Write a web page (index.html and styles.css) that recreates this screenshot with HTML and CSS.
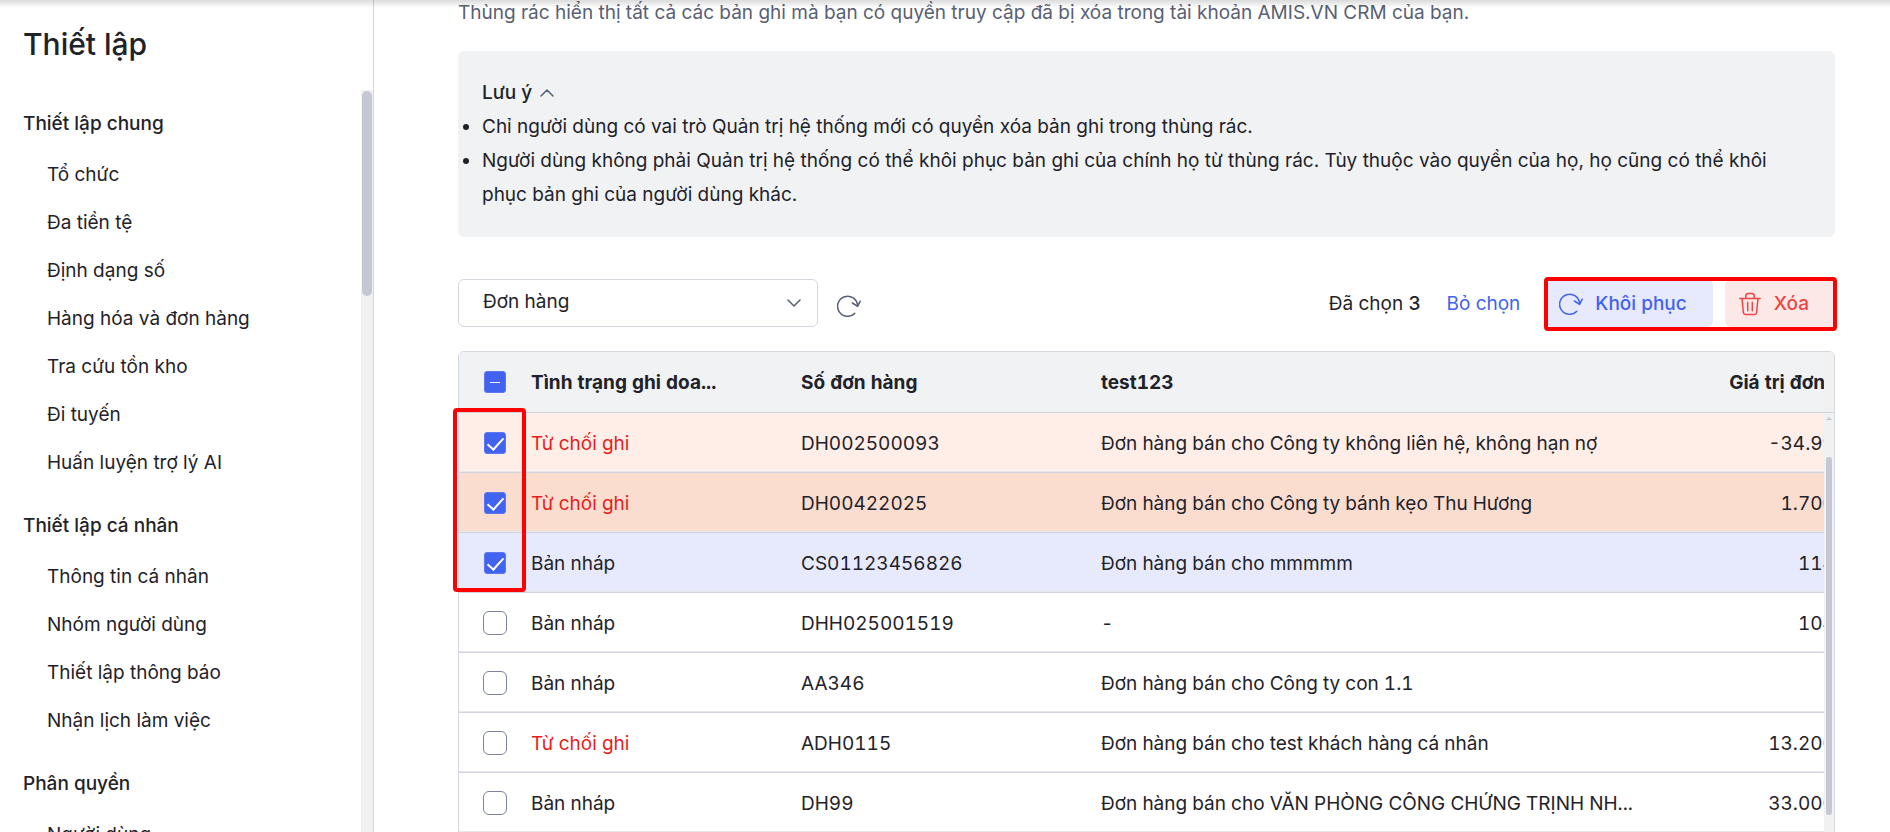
FILE: index.html
```html
<!DOCTYPE html>
<html lang="vi">
<head>
    <meta charset="UTF-8">
    <title>Thiết lập</title>
    <link rel="stylesheet" href="styles.css">
</head>
<body>
    <div class="top-shadow"></div>
    <div class="page">
        <aside class="sidebar">
            <h1>Thiết lập</h1>
            <div class="sidebar-body">
                <nav class="menu">
                    <h2>Thiết lập chung</h2>
                    <ul>
                        <li><a href="#">Tổ chức</a></li>
                        <li><a href="#">Đa tiền tệ</a></li>
                        <li><a href="#">Định dạng số</a></li>
                        <li><a href="#">Hàng hóa và đơn hàng</a></li>
                        <li><a href="#">Tra cứu tồn kho</a></li>
                        <li><a href="#">Đi tuyến</a></li>
                        <li><a href="#">Huấn luyện trợ lý AI</a></li>
                    </ul>
                    <h2>Thiết lập cá nhân</h2>
                    <ul>
                        <li><a href="#">Thông tin cá nhân</a></li>
                        <li><a href="#">Nhóm người dùng</a></li>
                        <li><a href="#">Thiết lập thông báo</a></li>
                        <li><a href="#">Nhận lịch làm việc</a></li>
                    </ul>
                    <h2>Phân quyền</h2>
                    <ul>
                        <li><a href="#">Người dùng</a></li>
                    </ul>
                </nav>
                <div class="scrollbar"><div class="thumb"></div></div>
            </div>
        </aside>

        <main class="content">
            <p class="description">Thùng rác hiển thị tất cả các bản ghi mà bạn có quyền truy cập đã bị xóa trong tài khoản AMIS.VN CRM của bạn.</p>

            <section class="note">
                <button type="button" class="note-title">Lưu ý
                    <svg width="14" height="8" viewBox="0 0 14 8"><path d="M1 7l6-6 6 6"/></svg>
                </button>
                <ul>
                    <li>Chỉ người dùng có vai trò Quản trị hệ thống mới có quyền xóa bản ghi trong thùng rác.</li>
                    <li>Người dùng không phải Quản trị hệ thống có thể khôi phục bản ghi của chính họ từ thùng rác. Tùy thuộc vào quyền của họ, họ cũng có thể khôi phục bản ghi của người dùng khác.</li>
                </ul>
            </section>

            <div class="toolbar">
                <div class="select-box">
                    <select aria-label="Loại bản ghi">
                        <option>Đơn hàng</option>
                    </select>
                    <svg width="14" height="8" viewBox="0 0 14 8"><path d="M1 1l6 6 6-6"/></svg>
                </div>
                <button type="button" class="refresh" aria-label="Tải lại">
                    <svg width="24" height="24" viewBox="0 0 24 24"><path d="M17.8 19.2A10 10 0 1 1 20.6 11.5M15.4 9l5.2 3.4L23.2 7.2"/></svg>
                </button>
                <div class="selected">Đã chọn <b>3</b></div>
                <a href="#" class="unselect">Bỏ chọn</a>
                <div class="actions">
                    <button type="button" class="btn restore">
                        <svg width="24" height="24" viewBox="0 0 24 24"><path d="M17.8 19.2A10 10 0 1 1 20.6 11.5M15.4 9l5.2 3.4L23.2 7.2"/></svg>
                        Khôi phục
                    </button>
                    <button type="button" class="btn delete">
                        <svg width="24" height="24" viewBox="0 0 24 24"><path d="M1.8 6.5h20.4M4 6.5l1.4 14.2a2 2 0 0 0 2 1.8h9.2a2 2 0 0 0 2-1.8L20 6.5M7.8 6.5V4a2.5 2.5 0 0 1 2.5-2.5h3.4A2.5 2.5 0 0 1 16.2 4v2.5M9.7 10.2v8.6M14.3 10.2v8.6"/></svg>
                        Xóa
                    </button>
                    <div class="mark mark-actions"></div>
                </div>
            </div>

            <div class="grid">
                <div class="grid-view">
                    <table>
                        <colgroup>
                            <col class="col-check">
                            <col class="col-status">
                            <col class="col-code">
                            <col>
                            <col class="col-value">
                        </colgroup>
                        <thead>
                            <tr>
                                <th><input type="checkbox" class="partial" aria-label="Chọn tất cả"></th>
                                <th>Tình trạng ghi doa...</th>
                                <th>Số đơn hàng</th>
                                <th>test123</th>
                                <th class="number">Giá trị đơn hàng</th>
                            </tr>
                        </thead>
                        <tbody>
                            <tr class="row-rejected">
                                <td><input type="checkbox" aria-label="DH002500093" checked></td>
                                <td class="rejected">Từ chối ghi</td>
                                <td>DH002500093</td>
                                <td>Đơn hàng bán cho Công ty không liên hệ, không hạn nợ</td>
                                <td class="number">-34.990,00</td>
                            </tr>
                            <tr class="row-hover">
                                <td><input type="checkbox" aria-label="DH00422025" checked></td>
                                <td class="rejected">Từ chối ghi</td>
                                <td>DH00422025</td>
                                <td>Đơn hàng bán cho Công ty bánh kẹo Thu Hương</td>
                                <td class="number">1.700.000</td>
                            </tr>
                            <tr class="row-selected">
                                <td><input type="checkbox" aria-label="CS01123456826" checked></td>
                                <td>Bản nháp</td>
                                <td>CS01123456826</td>
                                <td>Đơn hàng bán cho mmmmm</td>
                                <td class="number">114.000</td>
                            </tr>
                            <tr>
                                <td><input type="checkbox" aria-label="DHH025001519"></td>
                                <td>Bản nháp</td>
                                <td>DHH025001519</td>
                                <td>-</td>
                                <td class="number">104.000</td>
                            </tr>
                            <tr>
                                <td><input type="checkbox" aria-label="AA346"></td>
                                <td>Bản nháp</td>
                                <td>AA346</td>
                                <td>Đơn hàng bán cho Công ty con 1.1</td>
                                <td class="number"></td>
                            </tr>
                            <tr>
                                <td><input type="checkbox" aria-label="ADH0115"></td>
                                <td class="rejected">Từ chối ghi</td>
                                <td>ADH0115</td>
                                <td>Đơn hàng bán cho test khách hàng cá nhân</td>
                                <td class="number">13.200.000</td>
                            </tr>
                            <tr>
                                <td><input type="checkbox" aria-label="DH99"></td>
                                <td>Bản nháp</td>
                                <td>DH99</td>
                                <td>Đơn hàng bán cho VĂN PHÒNG CÔNG CHỨNG TRỊNH NH...</td>
                                <td class="number">33.000.000</td>
                            </tr>
                        </tbody>
                    </table>
                </div>
                <div class="grid-scroll">
                    <div class="corner"></div>
                    <div class="arrow"></div>
                    <div class="thumb"></div>
                </div>
                <div class="mark mark-rows"></div>
            </div>
        </main>
    </div>
</body>
</html>
```
FILE: styles.css
```css
* {
    box-sizing: border-box;
}

body {
    margin: 0;
    font-family: Inter, "Noto Sans", sans-serif;
    font-size: 19px;
    line-height: 24px;
    color: #1f2229;
    background-color: #fff;
    overflow: hidden;
}

h1, h2, p, ul {
    margin: 0;
    padding: 0;
}

button, select, input {
    font: inherit;
    color: inherit;
    margin: 0;
}

button {
    border: none;
    background: none;
    padding: 0;
    cursor: pointer;
}

a {
    text-decoration: none;
    color: inherit;
}

svg {
    flex: none;
    fill: none;
    stroke: #586074;
    stroke-width: 1.5;
    stroke-linecap: round;
    stroke-linejoin: round;
}

/* shadow under the app header */
.top-shadow {
    position: absolute;
    top: 0;
    left: 0;
    right: 0;
    height: 8px;
    background: linear-gradient(rgba(0, 0, 0, 0.14), rgba(0, 0, 0, 0));
}

.page {
    display: flex;
    height: 100vh;
}

/* sidebar */
.sidebar {
    flex: none;
    display: flex;
    flex-direction: column;
    width: 374px;
    border-right: 1px solid #d3d7de;
}

.sidebar h1 {
    flex: none;
    height: 90px;
    padding: 24px 23px 0;
    font-size: 30px;
    line-height: 40px;
    font-weight: 500;
}

.sidebar-body {
    flex: 1;
    min-height: 0;
    display: flex;
}

.menu {
    flex: 1;
    overflow: hidden;
    padding-top: 7px;
}

.menu h2 {
    padding-left: 23px;
    font-size: 19px;
    line-height: 54px;
    font-weight: 500;
}

.menu ul {
    list-style: none;
    margin-bottom: 12px;
}

.menu a {
    display: block;
    padding-left: 47px;
    line-height: 48px;
}

.scrollbar {
    width: 12px;
    padding: 1px;
    background-color: #f1f1f1;
}

.thumb {
    background-color: #c4c8d4;
    border-radius: 5px;
}

.scrollbar .thumb {
    height: 205px;
}

/* content */
.content {
    flex: 1;
    min-width: 0;
    padding: 1px 55px 0 84px;
}

.description {
    color: #586074;
    margin-bottom: 26px;
}

.note {
    padding: 25px 24px;
    border-radius: 6px;
    background-color: #f0f2f4;
    line-height: 34px;
}

.note-title {
    display: flex;
    align-items: center;
    gap: 8px;
    font-weight: 500;
}

.toolbar {
    display: flex;
    align-items: center;
    margin: 42px 0 24px;
}

.select-box {
    display: grid;
    align-items: center;
    width: 360px;
    margin-right: 19px;
}

.select-box select {
    grid-area: 1 / 1;
    appearance: none;
    height: 48px;
    padding: 0 24px 2px;
    border: 1px solid #d3d7de;
    border-radius: 6px;
    background-color: #fff;
}

.select-box svg {
    grid-area: 1 / 1;
    justify-self: end;
    margin-right: 17px;
    pointer-events: none;
}

.refresh {
    display: flex;
    margin-top: 5px;
}

.selected, .unselect {
    padding-top: 2px;
}

.selected {
    margin-left: auto;
}

.selected b {
    font-weight: 500;
}

.unselect {
    margin: 0 26px;
    color: #4262f0;
}

.actions {
    position: relative;
    display: flex;
    gap: 12px;
}

.btn {
    display: flex;
    align-items: center;
    gap: 12px;
    height: 48px;
    padding: 2px 26px 0 13px;
    border-radius: 6px;
    font-weight: 500;
}

.btn svg {
    stroke: currentColor;
}

.restore {
    color: #4262f0;
    background-color: #e7eafd;
}

.delete {
    color: #ee4444;
    background-color: #fde8e8;
}

/* red frames around the steps of the guide */
.mark {
    position: absolute;
    border: 4px solid #ff0000;
    border-radius: 4px;
    pointer-events: none;
}

.mark-actions {
    top: -2px;
    bottom: -4px;
    left: -2px;
    right: -2px;
}

.mark-rows {
    top: 56px;
    left: -6px;
    width: 73px;
    height: 184px;
}

/* table */
.grid {
    position: relative;
    display: flex;
    border: 1px solid #d3d7de;
    border-radius: 6px 6px 0 0;
}

.grid-view {
    flex: 1;
    min-width: 0;
    overflow: hidden;
    border-radius: 5px 0 0 0;
}

table {
    width: calc(100% + 65px);
    table-layout: fixed;
    border-collapse: separate;
    border-spacing: 0;
}

.col-check {
    width: 60px;
}

.col-status {
    width: 270px;
}

.col-code {
    width: 300px;
}

.col-value {
    width: 228px;
}

th, td {
    height: 60px;
    padding: 2px 12px 0;
    text-align: left;
    white-space: nowrap;
    border-bottom: 1px solid #d0d5dd;
    font-variant-numeric: tabular-nums;
}

th {
    height: 61px;
    background-color: #f0f2f4;
    font-weight: 700;
}

td {
    box-shadow: inset 0 -1px #e6e8ec;
}

th:first-child, td:first-child {
    padding: 0 0 0 24px;
}

th.number, td.number {
    text-align: right;
}

.rejected {
    color: #e61d1d;
}

.row-rejected {
    background-color: #feeee7;
}

.row-hover {
    background-color: #fbddd0;
}

.row-selected {
    background-color: #e7eafd;
}

input[type="checkbox"] {
    appearance: none;
    display: block;
    width: 24px;
    height: 24px;
    border: 1px solid #7b849c;
    border-radius: 6px;
    background-color: #fff;
}

input[type="checkbox"]:checked, input[type="checkbox"].partial {
    width: 22px;
    height: 22px;
    margin-left: 1px;
    border: 1px solid #5c78f2;
    border-radius: 3px;
    background-color: #4262f0;
}

input[type="checkbox"]:checked::before {
    content: "";
    display: block;
    width: 7px;
    height: 14px;
    margin: 1px 0 0 6px;
    border: solid #fff;
    border-width: 0 2px 2px 0;
    transform: rotate(42deg);
}

input.partial::before {
    content: "";
    display: block;
    width: 10px;
    height: 1px;
    margin: 10px auto 0;
    background-color: #fff;
}

.grid-scroll {
    flex: none;
    width: 10px;
    background-color: #f1f1f1;
    border-radius: 0 5px 0 0;
}

.corner {
    height: 61px;
    border-bottom: 1px solid #d0d5dd;
}

.arrow {
    width: 6px;
    margin: 4px auto 37px 2px;
    border: solid transparent;
    border-width: 0 3px 3px;
    border-bottom-color: #c4c8d4;
}

.grid-scroll .thumb {
    width: 6px;
    height: 358px;
    margin-left: 2px;
}
```
